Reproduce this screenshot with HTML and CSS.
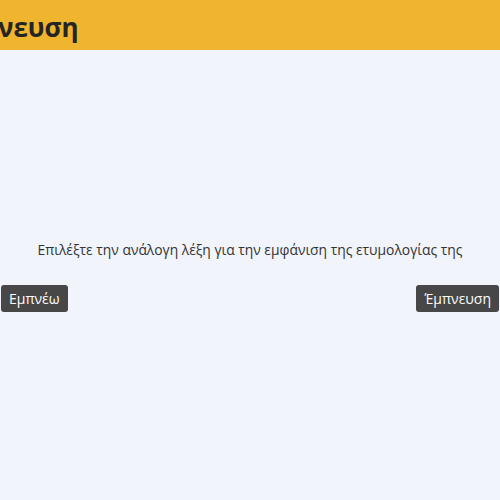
FILE: index.html
```html
<!DOCTYPE html>
<html lang="el">
<head>
<meta charset="utf-8">
<link rel="stylesheet" href="styles.css">
</head>
<body>
<header class="topbar"><h1 class="title">Έμπνευση</h1></header>
<main class="content">
  <p class="hint">Επιλέξτε την ανάλογη λέξη για την εμφάνιση της ετυμολογίας της</p>
  <div class="nav">
    <button class="btn">Εμπνέω</button>
    <button class="btn">Έμπνευση</button>
  </div>
</main>
</body>
</html>
```
FILE: styles.css
```css
html, body { margin: 0; padding: 0; }
body {
  background: #f1f4fb;
  font-family: "Open Sans", sans-serif;
  color: #333;
  width: 500px;
  height: 500px;
  overflow: hidden;
}
.topbar {
  height: 50px;
  background: #f0b52e;
  display: flex;
  align-items: center;
  overflow: hidden;
}
.title {
  margin: 4px 0 0 -56px;
  font-size: 26px;
  line-height: 30px;
  font-weight: 700;
  color: #252525;
  white-space: nowrap;
}
.content {
  display: flex;
  flex-direction: column;
  align-items: center;
  padding-top: 190px;
}
.hint {
  margin: 0;
  font-size: 13.85px;
  line-height: 20px;
  color: #333;
}
.nav {
  width: 498px;
  display: flex;
  justify-content: space-between;
  margin-top: 25px;
}
.btn {
  font-family: "Open Sans", sans-serif;
  font-size: 14px;
  color: #fff;
  background: #474747;
  border: none;
  border-radius: 3px;
  height: 27px;
  padding: 0 8px;
  line-height: 27px;
}
```
